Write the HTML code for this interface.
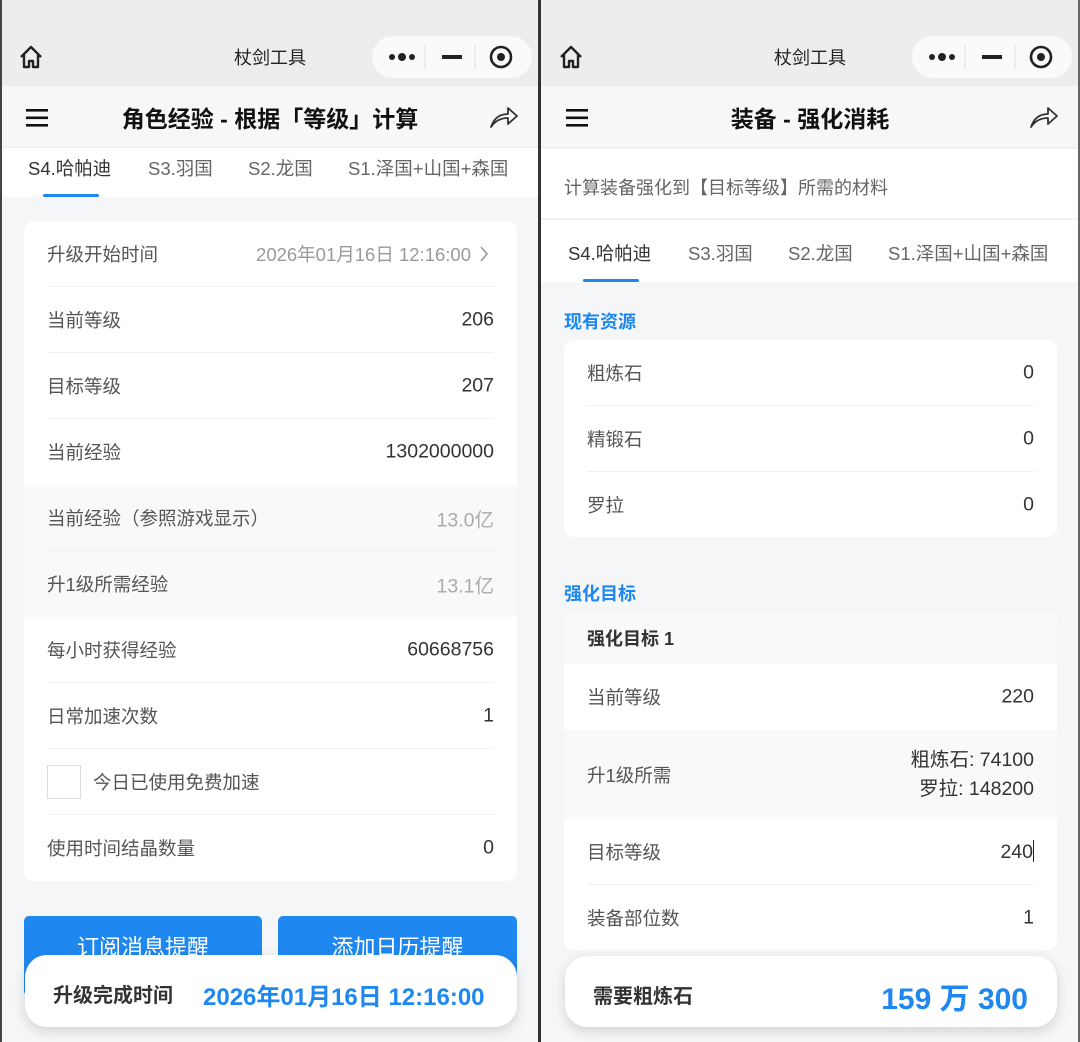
<!DOCTYPE html>
<html><head><meta charset="utf-8"><style>
*{margin:0;padding:0;box-sizing:border-box}
body{width:1080px;height:1042px;overflow:hidden;background:#f5f6f8;font-family:"Liberation Sans","Noto Sans CJK SC",sans-serif;position:relative}
.a{position:absolute}
.p{position:absolute;top:0;width:540px;height:1042px;overflow:hidden;background:#f5f6f8}
.top{left:0;top:0;width:540px;height:86px;background:#ededed}
.ttl{left:0;width:540px;text-align:center;top:44px;font-size:18px;color:#222}
.cap{left:372px;top:36px;width:160px;height:42px;background:#fafafa;border-radius:21px}
.nav{left:0;top:86px;width:540px;height:62px;background:#f7f7f7;border-bottom:1px solid #ececec}
.nt{left:0;width:540px;text-align:center;top:100px;font-size:23px;font-weight:bold;color:#111}
.tabs{left:0;width:540px;height:49px;background:#fff}
.tab{font-size:18.5px;color:#666;white-space:nowrap}
.ul{width:56px;height:3px;background:#1e88f0;border-radius:2px}
.card{background:#fff;border-radius:10px;overflow:hidden}
.row{position:absolute;left:0;width:100%;}
.row .l{position:absolute;left:23px;font-size:18.5px;color:#555;top:50%;transform:translateY(-50%);white-space:nowrap}
.row .v{position:absolute;right:23px;font-size:19.5px;color:#333;top:50%;transform:translateY(-50%);text-align:right;white-space:nowrap}
.sep{position:absolute;left:23px;right:23px;bottom:0;height:1px;background:#f0f0f0}
.g{background:#f9f9fa}
.btn{background:#1e88f0;color:#fff;font-size:22px;text-align:center;border-radius:5px;padding-top:14px}
.fl{background:#fff;border-radius:22px;box-shadow:0 4px 12px rgba(0,0,0,.15)}
.sec{font-size:18px;font-weight:bold;color:#1e88f0}
</style></head><body>

<!-- LEFT -->
<div class="p" style="left:0">
 <div class="a top"></div>
 <svg class="a" style="left:18px;top:44px" width="26" height="26" viewBox="0 0 26 26"><path d="M3 13 L13 3 L23 13 M6 11 V23 H11 V17 H15 V23 H20 V11" fill="none" stroke="#222" stroke-width="2.4" stroke-linejoin="round"/></svg>
 <div class="a ttl">杖剑工具</div>
 <div class="a cap">
  <svg class="a" style="left:0;top:0" width="160" height="42"><circle cx="20" cy="21" r="3" fill="#222"/><circle cx="30" cy="21" r="4" fill="#222"/><circle cx="40" cy="21" r="3" fill="#222"/><line x1="53" y1="9" x2="53" y2="33" stroke="#ddd"/><rect x="70" y="19" width="20" height="4" fill="#222"/><line x1="103" y1="9" x2="103" y2="33" stroke="#ddd"/><circle cx="129" cy="21" r="10" fill="none" stroke="#222" stroke-width="2.6"/><circle cx="129" cy="21" r="4" fill="#222"/></svg>
 </div>
 <div class="a nav"></div>
 <svg class="a" style="left:26px;top:108px" width="22" height="20"><rect y="1" width="22" height="2.6" fill="#111"/><rect y="8.5" width="22" height="2.6" fill="#111"/><rect y="16" width="22" height="2.6" fill="#111"/></svg>
 <div class="a nt">角色经验 - 根据「等级」计算</div>
 <svg class="a" style="left:489px;top:104px" width="30" height="26" viewBox="0 0 30 26"><path d="M2 23 C5 14 11 10 19 10 V4 L28 12 L19 20 V14 C12 14 6 17 2 23 Z" fill="none" stroke="#333" stroke-width="1.8" stroke-linejoin="round"/></svg>
 <div class="a tabs" style="top:148px"></div>
 <div class="a tab" style="left:28px;top:155px;color:#333">S4.哈帕迪</div>
 <div class="a tab" style="left:148px;top:155px">S3.羽国</div>
 <div class="a tab" style="left:248px;top:155px">S2.龙国</div>
 <div class="a tab" style="left:348px;top:155px">S1.泽国+山国+森国</div>
 <div class="a ul" style="left:43px;top:194px"></div>

 <div class="a card" style="left:24px;top:221px;width:493px;height:660px">
  <div class="row" style="top:0;height:66px"><span class="l">升级开始时间</span><span class="v" style="color:#999;right:46px;font-size:18.5px">2026年01月16日 12:16:00</span><svg class="a" style="right:28px;top:25px" width="10" height="16"><path d="M2 1 L8 8 L2 15" fill="none" stroke="#999" stroke-width="1.6"/></svg><div class="sep"></div></div>
  <div class="row" style="top:66px;height:66px"><span class="l">当前等级</span><span class="v">206</span><div class="sep"></div></div>
  <div class="row" style="top:132px;height:66px"><span class="l">目标等级</span><span class="v">207</span><div class="sep"></div></div>
  <div class="row" style="top:198px;height:66px"><span class="l">当前经验</span><span class="v">1302000000</span></div>
  <div class="row g" style="top:264px;height:66px"><span class="l">当前经验（参照游戏显示）</span><span class="v" style="color:#aaa">13.0亿</span><div class="sep"></div></div>
  <div class="row g" style="top:330px;height:66px"><span class="l">升1级所需经验</span><span class="v" style="color:#aaa">13.1亿</span></div>
  <div class="row" style="top:396px;height:66px"><span class="l">每小时获得经验</span><span class="v">60668756</span><div class="sep"></div></div>
  <div class="row" style="top:462px;height:66px"><span class="l">日常加速次数</span><span class="v">1</span><div class="sep"></div></div>
  <div class="row" style="top:528px;height:66px"><div class="a" style="left:23px;top:16px;width:34px;height:34px;border:1px solid #ddd"></div><span class="l" style="left:69px">今日已使用免费加速</span><div class="sep"></div></div>
  <div class="row" style="top:594px;height:66px"><span class="l">使用时间结晶数量</span><span class="v">0</span></div>
 </div>
 <div class="a btn" style="left:24px;top:916px;width:238px;height:80px">订阅消息提醒</div>
 <div class="a btn" style="left:278px;top:916px;width:239px;height:80px">添加日历提醒</div>
 <div class="a fl" style="left:25px;top:955px;width:492px;height:72px">
  <span class="a" style="left:28px;top:24px;font-size:20px;font-weight:bold;color:#333">升级完成时间</span>
  <span class="a" style="left:178px;top:22px;font-size:24px;font-weight:bold;color:#1e88f0">2026年01月16日 12:16:00</span>
 </div>
</div>

<!-- RIGHT -->
<div class="p" style="left:540px">
 <div class="a top"></div>
 <svg class="a" style="left:18px;top:44px" width="26" height="26" viewBox="0 0 26 26"><path d="M3 13 L13 3 L23 13 M6 11 V23 H11 V17 H15 V23 H20 V11" fill="none" stroke="#222" stroke-width="2.4" stroke-linejoin="round"/></svg>
 <div class="a ttl">杖剑工具</div>
 <div class="a cap">
  <svg class="a" style="left:0;top:0" width="160" height="42"><circle cx="20" cy="21" r="3" fill="#222"/><circle cx="30" cy="21" r="4" fill="#222"/><circle cx="40" cy="21" r="3" fill="#222"/><line x1="53" y1="9" x2="53" y2="33" stroke="#ddd"/><rect x="70" y="19" width="20" height="4" fill="#222"/><line x1="103" y1="9" x2="103" y2="33" stroke="#ddd"/><circle cx="129" cy="21" r="10" fill="none" stroke="#222" stroke-width="2.6"/><circle cx="129" cy="21" r="4" fill="#222"/></svg>
 </div>
 <div class="a nav"></div>
 <svg class="a" style="left:26px;top:108px" width="22" height="20"><rect y="1" width="22" height="2.6" fill="#111"/><rect y="8.5" width="22" height="2.6" fill="#111"/><rect y="16" width="22" height="2.6" fill="#111"/></svg>
 <div class="a nt">装备 - 强化消耗</div>
 <svg class="a" style="left:489px;top:104px" width="30" height="26" viewBox="0 0 30 26"><path d="M2 23 C5 14 11 10 19 10 V4 L28 12 L19 20 V14 C12 14 6 17 2 23 Z" fill="none" stroke="#333" stroke-width="1.8" stroke-linejoin="round"/></svg>
 <div class="a" style="left:0;top:149px;width:540px;height:70px;background:#fff;border-bottom:1px solid #eee"></div>
 <div class="a" style="left:24px;top:174px;font-size:18px;color:#666">计算装备强化到【目标等级】所需的材料</div>
 <div class="a tabs" style="top:220px;height:62px"></div>
 <div class="a tab" style="left:28px;top:240px;color:#333">S4.哈帕迪</div>
 <div class="a tab" style="left:148px;top:240px">S3.羽国</div>
 <div class="a tab" style="left:248px;top:240px">S2.龙国</div>
 <div class="a tab" style="left:348px;top:240px">S1.泽国+山国+森国</div>
 <div class="a ul" style="left:43px;top:279px"></div>

 <div class="a sec" style="left:24px;top:308px">现有资源</div>
 <div class="a card" style="left:24px;top:340px;width:493px;height:197px">
  <div class="row" style="top:0;height:66px"><span class="l">粗炼石</span><span class="v">0</span><div class="sep"></div></div>
  <div class="row" style="top:66px;height:66px"><span class="l">精锻石</span><span class="v">0</span><div class="sep"></div></div>
  <div class="row" style="top:132px;height:65px"><span class="l">罗拉</span><span class="v">0</span></div>
 </div>
 <div class="a sec" style="left:24px;top:580px">强化目标</div>
 <div class="a card" style="left:24px;top:612px;width:493px;height:338px">
  <div class="row g" style="top:0;height:52px"><span class="l" style="font-weight:bold;color:#333;font-size:18px">强化目标 1</span></div>
  <div class="row" style="top:52px;height:66px"><span class="l">当前等级</span><span class="v">220</span></div>
  <div class="row g" style="top:118px;height:89px"><span class="l">升1级所需</span><span class="v" style="line-height:29px">粗炼石: 74100<br>罗拉: 148200</span></div>
  <div class="row" style="top:207px;height:66px"><span class="l">目标等级</span><span class="v">240<span style="display:inline-block;width:1px;height:22px;background:#222;vertical-align:-4px"></span></span><div class="sep"></div></div>
  <div class="row" style="top:273px;height:65px"><span class="l">装备部位数</span><span class="v">1</span></div>
 </div>
 <div class="a fl" style="left:25px;top:956px;width:492px;height:71px">
  <span class="a" style="left:28px;top:24px;font-size:20px;font-weight:bold;color:#333">需要粗炼石</span>
  <span class="a" style="right:29px;top:18px;font-size:30px;font-weight:bold;color:#1e88f0">159 万 300</span>
 </div>
</div>

<div class="a" style="left:0;top:0;width:2px;height:1042px;background:#444"></div>
<div class="a" style="left:538px;top:0;width:3px;height:1042px;background:#333"></div>
<div class="a" style="left:1078px;top:0;width:2px;height:1042px;background:#666"></div>
</body></html>
